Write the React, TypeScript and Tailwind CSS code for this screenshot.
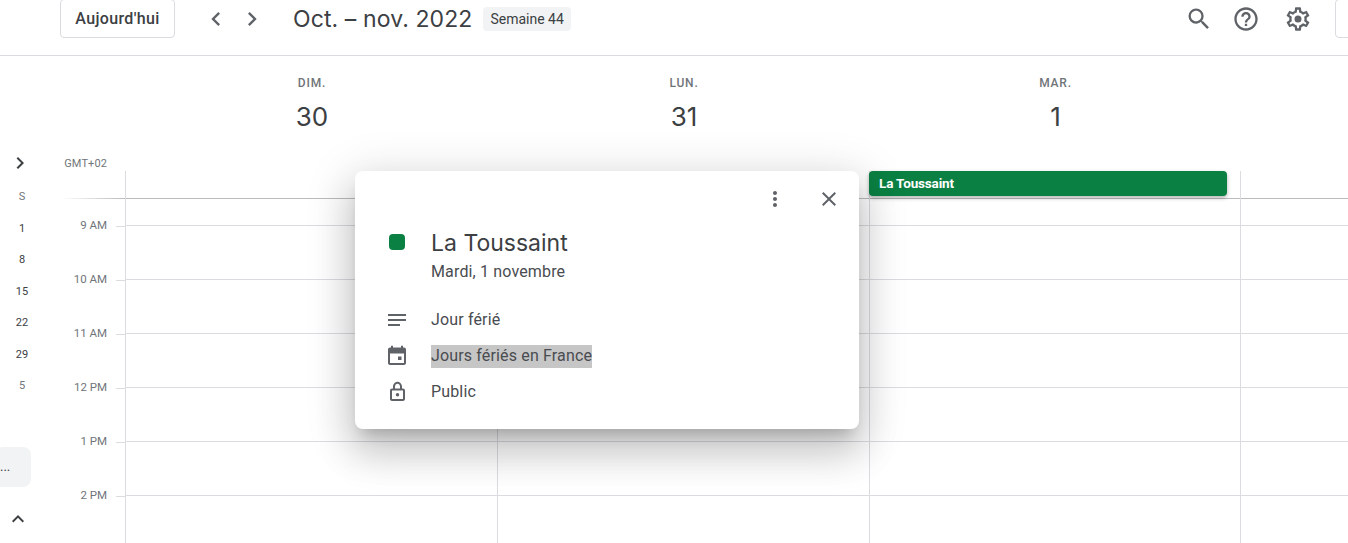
const ICONS = {
  search: 'M15.5 14h-.79l-.28-.27A6.471 6.471 0 0 0 16 9.5 6.5 6.5 0 1 0 9.5 16c1.61 0 3.09-.59 4.23-1.57l.27.28v.79l5 4.99L20.49 19l-4.99-5zm-6 0C7.01 14 5 11.99 5 9.5S7.01 5 9.5 5 14 7.01 14 9.5 11.99 14 9.5 14z',
  help: 'M11 18h2v-2h-2v2zm1-16C6.48 2 2 6.48 2 12s4.48 10 10 10 10-4.48 10-10S17.52 2 12 2zm0 18c-4.41 0-8-3.59-8-8s3.59-8 8-8 8 3.59 8 8-3.59 8-8 8zm0-14c-2.21 0-4 1.79-4 4h2c0-1.1.9-2 2-2s2 .9 2 2c0 2-3 1.75-3 5h2c0-2.25 3-2.5 3-5 0-2.21-1.79-4-4-4z',
  gear: 'M19.43 12.98c.04-.32.07-.64.07-.98s-.03-.66-.07-.98l2.11-1.65c.19-.15.24-.42.12-.64l-2-3.46c-.12-.22-.39-.3-.61-.22l-2.49 1c-.52-.4-1.08-.73-1.69-.98l-.38-2.65A.488.488 0 0 0 14 2h-4c-.25 0-.46.18-.49.42l-.38 2.65c-.61.25-1.17.59-1.69.98l-2.49-1c-.23-.09-.49 0-.61.22l-2 3.46c-.13.22-.07.49.12.64l2.11 1.65c-.04.32-.07.65-.07.98s.03.66.07.98l-2.11 1.65c-.19.15-.24.42-.12.64l2 3.46c.12.22.39.3.61.22l2.49-1c.52.4 1.08.73 1.69.98l.38 2.65c.03.24.24.42.49.42h4c.25 0 .46-.18.49-.42l.38-2.65c.61-.25 1.17-.59 1.69-.98l2.49 1c.23.09.49 0 .61-.22l2-3.46c.12-.22.07-.49-.12-.64l-2.11-1.65zM17.45 11.27c.04.31.05.52.05.73 0 .21-.02.43-.05.73l-.14 1.13.89.7 1.08.84-.7 1.21-1.27-.51-1.04-.42-.9.68c-.43.32-.84.56-1.25.73l-1.06.43-.16 1.13-.2 1.35h-1.4l-.19-1.35-.16-1.13-1.06-.43c-.43-.18-.83-.41-1.23-.71l-.91-.7-1.06.43-1.27.51-.7-1.21 1.08-.84.89-.7-.14-1.13c-.03-.31-.05-.54-.05-.74s.02-.43.05-.73l.14-1.13-.89-.7-1.08-.84.7-1.21 1.27.51 1.04.42.9-.68c.43-.32.84-.56 1.25-.73l1.06-.43.16-1.13.2-1.35h1.39l.19 1.35.16 1.13 1.06.43c.43.18.83.41 1.23.71l.91.7 1.06-.43 1.27-.51.7 1.21-1.07.85-.89.7.14 1.13zM12 9a3 3 0 1 0 0 6 3 3 0 0 0 0-6z',
  more: 'M12 8c1.1 0 2-.9 2-2s-.9-2-2-2-2 .9-2 2 .9 2 2 2zm0 2c-1.1 0-2 .9-2 2s.9 2 2 2 2-.9 2-2-.9-2-2-2zm0 6c-1.1 0-2 .9-2 2s.9 2 2 2 2-.9 2-2-.9-2-2-2z',
  close: 'M19 6.41 17.59 5 12 10.59 6.41 5 5 6.41 10.59 12 5 17.59 6.41 19 12 13.41 17.59 19 19 17.59 13.41 12z',
  notes: 'M3 19h12v-2H3zM3 7v2h18V7zm0 7h18v-2H3z',
  calendar: 'M19 4.5h-1V2.7h-2v1.8H8V2.7H6v1.8H5c-1.1 0-2 .9-2 2V20c0 1.1.9 2 2 2h14c1.1 0 2-.9 2-2V6.5c0-1.1-.9-2-2-2zM19 20H5V10.5h14V20zM13 13.5h3.5V17H13z',
  lock: 'M18 9.5h-1v-2C17 4.9 14.8 2.7 12.5 2.7S8 4.9 8 7.5v2H7c-1.1 0-2 .9-2 2V20c0 1.1.9 2 2 2h11c1.1 0 2-.9 2-2v-8.5c0-1.1-.9-2-2-2zM10 7.5c0-1.4 1.1-2.8 2.5-2.8S15 6.1 15 7.5v2h-5v-2zM18 20H7v-8.5h11V20zM12.5 17.5a1.75 1.75 0 1 0 0-3.5 1.75 1.75 0 0 0 0 3.5z',
  left: 'M15.41 7.41 14 6l-6 6 6 6 1.41-1.41L10.83 12z',
  right: 'M10 6 8.59 7.41 13.17 12l-4.58 4.58L10 18l6-6z',
  up: 'M12 8l-6 6 1.41 1.41L12 10.83l4.59 4.58L18 14z',
};

function Icon({ name, className = 'w-6 h-6 text-[#5f6368]' }: { name: keyof typeof ICONS; className?: string }) {
  return (
    <svg viewBox="0 0 24 24" className={`shrink-0 fill-current ${className}`}>
      <path fillRule="evenodd" d={ICONS[name]} />
    </svg>
  );
}

const days = [
  { label: 'DIM.', num: '30', w: 'w-[372px]' },
  { label: 'LUN.', num: '31', w: 'w-[372px]' },
  { label: 'MAR.', num: '1', w: 'w-[371px]' },
];
const hours = ['9 AM', '10 AM', '11 AM', '12 PM', '1 PM', '2 PM'];
const miniDays = ['S', '1', '8', '15', '22', '29', '5'];
const details = [
  { icon: 'notes', text: 'Jour férié' },
  { icon: 'calendar', text: 'Jours fériés en France', selected: true },
  { icon: 'lock', text: 'Public' },
] as const;

function DayColumn({ index }: { index: number }) {
  return (
    <div className={`shrink-0 border-l border-[#dadce0] ${index === 3 ? 'w-[108px]' : index === 2 ? 'w-[371px]' : 'w-[372px]'}`}>
      <div className="h-[28px] border-b border-[#b9bbbd]">
        {index === 2 && (
          <div className="h-[25px] mr-[13px] -ml-px pl-[10px] flex items-center bg-[#0b8043] rounded text-white text-[13.5px] font-bold tracking-[-0.15px] shadow-[0_2px_4px_rgba(0,0,0,0.3)]">
            La Toussaint
          </div>
        )}
      </div>
      <div className="h-[27px] border-b border-[#dadce0]" />
      {[0, 1, 2, 3, 4, 5, 6].map((i) => (
        <div key={i} className="h-[54px] border-b border-[#dadce0]" />
      ))}
    </div>
  );
}

export default function App() {
  return (
    <div className="relative w-[1348px] h-[543px] overflow-hidden bg-white font-['Roboto',sans-serif] text-[#3c4043]">
      <header className="flex items-start h-[56px] pl-[60px] border-b border-[#dadce0]">
        <button className="w-[115px] h-[39px] -mt-px border border-[#dadce0] rounded text-[16px] font-medium tracking-[0.35px]">
          Aujourd'hui
        </button>
        <div className="flex mt-[5px] ml-[27px] gap-[8px]">
          <Icon name="left" className="w-7 h-7 text-[#5f6368]" />
          <Icon name="right" className="w-7 h-7 text-[#5f6368]" />
        </div>
        <h1 className="ml-[27px] mt-[3px] text-[23px] leading-[32px] font-['Inter',sans-serif] tracking-[0.1px] text-[#3c4043] whitespace-nowrap">
          Oct. – nov. 2022
        </h1>
        <span className="ml-[11px] mt-[7px] h-[24px] px-[7px] flex items-center rounded bg-[#f1f3f4] text-[14px]">
          Semaine 44
        </span>
        <div className="ml-auto flex items-start">
          <div className="flex mt-[5px] gap-[19px]">
            <Icon name="search" className="w-7 h-7 text-[#5f6368]" />
            <Icon name="help" className="w-7 h-7 text-[#5f6368]" />
            <div className="ml-[5px]">
              <Icon name="gear" className="w-7 h-7 text-[#5f6368]" />
            </div>
          </div>
          <div className="ml-[23px] -mr-[50px] w-[63px] h-[39px] -mt-px border border-[#dadce0] rounded" />
        </div>
      </header>

      <div className="flex">
        <aside className="w-[60px] shrink-0 relative">
          <div className="mt-[95px] ml-[8px]">
            <Icon name="right" className="w-6 h-6 text-[#3c4043]" />
          </div>
          <div className="mt-[6.5px] w-[44px] flex flex-col items-center">
            {miniDays.map((d, i) => (
              <div key={i} className={`h-[31.5px] flex items-center text-[11px] ${i === 0 || i === 6 ? 'text-[#70757a]' : 'text-[#3c4043]'}`}>
                {d}
              </div>
            ))}
          </div>
          <div className="mt-[45px] -ml-[5px] w-[36px] h-[40px] pl-[5px] flex items-center bg-[#f1f3f4] rounded-lg text-[13px] text-[#3c4043]">
            ...
          </div>
          <div className="mt-[20px] ml-[6px]">
            <Icon name="up" className="w-6 h-6 text-[#3c4043]" />
          </div>
        </aside>

        <div className="flex-1">
          <div className="flex h-[115px]">
            <div className="w-[65px] shrink-0 flex flex-col">
              <span className="mt-[101px] w-[47px] text-right text-[11px] leading-[14px] tracking-[0.1px] text-[#70757a]">GMT+02</span>
            </div>
            {days.map((d) => (
              <div key={d.label} className={`${d.w} shrink-0 pl-[2px] flex flex-col items-center`}>
                <span className="mt-[20px] text-[12px] leading-[14px] font-medium tracking-[0.8px] text-[#70757a]">{d.label}</span>
                <span className="mt-[10px] text-[26px] leading-[34px] font-['Inter',sans-serif] text-[#3c4043]">{d.num}</span>
              </div>
            ))}
          </div>

          <div className="flex">
            <div className="w-[65px] shrink-0">
              <div className="h-[27px]" />
              <div className="h-px bg-gradient-to-r from-white to-[#b9bbbd]" />
              {hours.map((h) => (
                <div key={h} className="h-[54px] flex items-center">
                  <span className="w-[47px] text-right text-[11.5px] text-[#70757a]">{h}</span>
                  <div className="ml-[9px] w-[9px] h-px bg-[#dadce0]" />
                </div>
              ))}
            </div>
            {[0, 1, 2, 3].map((i) => (
              <DayColumn key={i} index={i} />
            ))}
          </div>
        </div>
      </div>

      <section className="absolute left-[355px] top-[171px] w-[504px] h-[258px] bg-white rounded-lg shadow-[0_24px_38px_3px_rgba(0,0,0,0.14),0_9px_46px_8px_rgba(0,0,0,0.12),0_11px_15px_-7px_rgba(0,0,0,0.2)] pt-[16px] pl-[30px] pr-[18px]">
        <div className="flex justify-end gap-[30px]">
          <Icon name="more" />
          <Icon name="close" />
        </div>
        <div className="flex mt-[15px]">
          <div className="w-[24px] shrink-0 flex justify-center pt-[8px]">
            <div className="w-4 h-4 rounded bg-[#0b8043]" />
          </div>
          <div className="ml-[22px]">
            <h2 className="mt-[1px] text-[23px] leading-[32px] font-['Inter',sans-serif] text-[#3c4043]">La Toussaint</h2>
            <p className="text-[16px] leading-[20px] tracking-[0.15px] mt-[3px] text-[#494c50]">Mardi, 1 novembre</p>
          </div>
        </div>
        <div className="mt-[19px] flex flex-col">
          {details.map((d) => (
            <div key={d.icon} className="h-[36px] flex items-center">
              <Icon name={d.icon} />
              <span className={`ml-[22px] mt-[2px] pb-[2px] text-[16px] leading-[21px] tracking-[0.15px] text-[#494c50] ${'selected' in d ? 'bg-[#c6c6c6]' : ''}`}>
                {d.text}
              </span>
            </div>
          ))}
        </div>
      </section>
    </div>
  );
}
